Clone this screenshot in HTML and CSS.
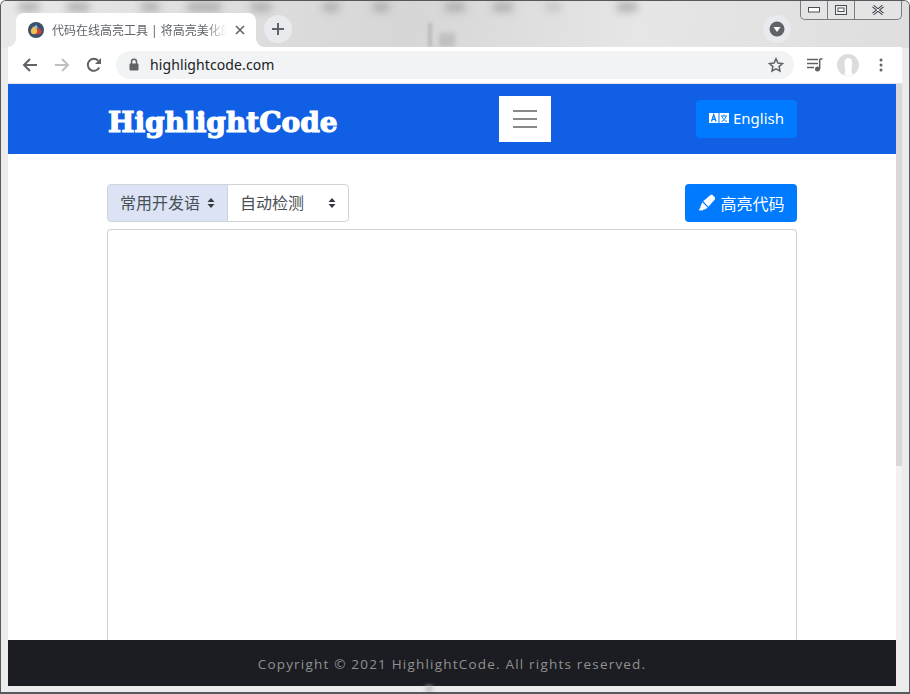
FILE: index.html
```html
<!DOCTYPE html>
<html>

<head>
    <title>代码在线高亮工具 | 将高亮美化的代码一键粘贴到 Word 或 PPT 中</title>
    <meta charset="utf-8">
    <meta name="viewport" content="width=device-width, initial-scale=1.0">
    <link rel="stylesheet" href="styles.css">
</head>

<body>
    <div class="vindue">
        <!-- sløret baggrund bag fanebladene -->
        <div class="sloret">
            <i class="klat k1"></i><i class="klat k2"></i><i class="klat k3"></i><i class="klat k4"></i>
            <i class="klat k5"></i><i class="klat k6"></i><i class="klat k7"></i><i class="klat k8"></i>
            <i class="klat k9"></i><i class="klat k10"></i><i class="klat k11"></i><i class="klat k12"></i>
            <i class="klat k13"></i>
        </div>
        <i class="bundklat"></i>

        <div class="vinduesknapper">
            <span class="vk"><svg width="12" height="6" viewBox="0 0 12 6"><rect x="0.5" y="0.5" width="11" height="4.5" fill="#fff" stroke="#4a4f57"/></svg></span>
            <span class="vk"><svg width="12" height="10" viewBox="0 0 12 10"><rect x="0.5" y="0.5" width="11" height="9" fill="#eee" stroke="#4a4f57"/><rect x="3" y="3" width="6" height="3.5" fill="#fff" stroke="#4a4f57"/></svg></span>
            <span class="vk luk"><svg width="12" height="10" viewBox="0 0 12 10"><path d="M1 1l10 8M11 1L1 9" stroke="#4a4f57" stroke-width="3"/><path d="M1 1l10 8M11 1L1 9" stroke="#fff" stroke-width="1"/></svg></span>
        </div>

        <div class="fanelinje">
            <div class="fane">
                <svg class="favicon" width="16" height="16" viewBox="0 0 16 16"><circle cx="8" cy="8" r="8" fill="#3c4f6b"/><path d="M10.500 5.500c2 1.500 3 2.800 3 4a3 3 0 0 1-6 0c0-1.200 1-2.500 3-4z" fill="#c9423a"/><path d="M6 4c2 2 3.200 3.500 3.200 5a3.200 3.200 0 0 1-6.400 0C2.800 7.500 4 6 6 4z" fill="#eec04f"/><path d="M8 2.500l1.800 3.200L8 7.500 6.600 5z" fill="#8fc3ee"/></svg>
                <span class="fanetitel">代码在线高亮工具 | 将高亮美化的</span>
                <svg class="faneluk" width="10" height="10" viewBox="0 0 10 10"><path d="M1 1l8 8M9 1l-8 8" stroke="#5f6368" stroke-width="1.600"/></svg>
            </div>
            <div class="rund ny">
                <svg width="14" height="14" viewBox="0 0 14 14"><path d="M7 1v12M1 7h12" stroke="#5f6368" stroke-width="2"/></svg>
            </div>
            <div class="rund ned">
                <svg width="16" height="16" viewBox="0 0 16 16"><circle cx="8" cy="8" r="7.500" fill="#5f6368"/><path d="M4.500 6h7L8 11z" fill="#fff"/></svg>
            </div>
        </div>

        <div class="vaerktoj">
            <svg class="ikon" width="16" height="16" viewBox="0 0 16 16"><path d="M15 8H2M8 2L2 8l6 6" fill="none" stroke="#5f6368" stroke-width="2"/></svg>
            <svg class="ikon" width="16" height="16" viewBox="0 0 16 16"><path d="M1 8h13M8 2l6 6-6 6" fill="none" stroke="#bdc1c6" stroke-width="2"/></svg>
            <svg class="ikon" width="16" height="16" viewBox="0 0 16 16"><path d="M13.200 10.500A6 6 0 1 1 12.300 3.800" fill="none" stroke="#5f6368" stroke-width="2"/><path d="M15 1v6H9z" fill="#5f6368"/></svg>
            <div class="adresse">
                <svg width="10" height="13" viewBox="0 0 10 13"><path d="M2.500 6V3.800a2.500 2.500 0 0 1 5 0V6" fill="none" stroke="#5f6368" stroke-width="1.500"/><rect x="0.500" y="5.500" width="9" height="7" rx="1" fill="#5f6368"/></svg>
                <span class="url">highlightcode.com</span>
                <svg class="stjerne" width="16" height="16" viewBox="0 0 16 16"><path d="M8 1.800l1.900 4.200 4.600.5-3.400 3.100.9 4.500L8 11.800l-4 2.300.9-4.500L1.500 6.500l4.600-.5z" fill="none" stroke="#5f6368" stroke-width="1.500"/></svg>
            </div>
            <svg class="spilleliste" width="16" height="14" viewBox="0 0 16 14"><path d="M0 1.500h11M0 5.500h11M0 9.500h7" stroke="#5f6368" stroke-width="1.500"/><path d="M12.700 1h2.800M12.700 1v10" stroke="#5f6368" stroke-width="1.500"/><circle cx="10.500" cy="11" r="2.500" fill="#5f6368"/></svg>
            <svg class="profil" width="22" height="22" viewBox="0 0 22 22"><circle cx="11" cy="11" r="11" fill="#dcdcdc"/><path d="M7 21c2-3 1-6 .5-10C7 6 9 4 11.500 4S15.500 6 15 11c-.4 4-1 7 1 9.500A11 11 0 0 1 7 21z" fill="#fff"/></svg>
            <svg class="prikker" width="4" height="14" viewBox="0 0 4 14"><circle cx="2" cy="2" r="1.500" fill="#5f6368"/><circle cx="2" cy="7" r="1.500" fill="#5f6368"/><circle cx="2" cy="12" r="1.500" fill="#5f6368"/></svg>
        </div>

        <div class="side">
            <div class="indhold">
                <header class="top">
                    <div class="top-indre">
                        <a class="logo" href="#">HighlightCode</a>
                        <button class="burger"><span></span><span></span><span></span></button>
                        <button class="knap sprog">
                            <svg width="20" height="10" viewBox="0 0 20 10"><rect width="9.500" height="10" fill="#fff"/><rect x="10.500" width="9.500" height="10" fill="#fff"/><path d="M2.500 8.500L4.700 1.800 7 8.500M3.300 6.300h2.900" fill="none" stroke="#007bff" stroke-width="1.300"/><path d="M12 3h6M15 1.500V3M13 3.500c.8 2.500 3 4 5 5M17 3.500c-.6 2.500-2.500 4-4.500 5" fill="none" stroke="#007bff" stroke-width="1"/></svg>
                            English
                        </button>
                    </div>
                </header>

                <main class="hoved">
                    <div class="raekke">
                        <div class="valg">
                            <div class="valg-felt forst">常用开发语<svg class="pile" width="8" height="12" viewBox="0 0 8 12"><path d="M4 1l3.500 4h-7zM4 11L.5 7h7z" fill="#343a40"/></svg></div>
                            <div class="valg-felt andet">自动检测<svg class="pile" width="8" height="12" viewBox="0 0 8 12"><path d="M4 1l3.500 4h-7zM4 11L.5 7h7z" fill="#343a40"/></svg></div>
                        </div>
                        <button class="knap fremhaev">
                            <svg width="20" height="18" viewBox="0 0 18 16"><path d="M6.500 6.500L13 .8c.6-.5 1.400-.4 1.900.1l2 2c.5.600.5 1.300 0 1.900l-5.700 6.500z" fill="#fff"/><path d="M5.700 7.300l4.800 4.800-2 1.500c-.5.300-1 .3-1.500.1l-1 1-3.800-.2L4 12.300c-.2-.5-.1-1 .2-1.500z" fill="#fff"/></svg>
                            高亮代码
                        </button>
                    </div>
                    <div class="kode"></div>
                </main>
            </div>
            <div class="rullebjaelke"><div class="rulle-greb"></div></div>
        </div>

        <footer class="bund">Copyright © 2021 HighlightCode. All rights reserved.</footer>
    </div>
</body>

</html>
```

FILE: styles.css
```css
* {
    box-sizing: border-box;
}

body {
    margin: 0;
    font-family: "Noto Sans", "Noto Sans CJK SC", sans-serif;
    overflow: hidden;
}

.vindue {
    position: relative;
    display: flex;
    flex-direction: column;
    width: 910px;
    height: 694px;
    padding: 0 7px 6px;
    overflow: hidden;
    background: #ececec;
    border: 1px solid #55585c;
    border-bottom-width: 2px;
    border-radius: 6px 6px 0 0;
}

/* sløret baggrund */
.sloret {
    position: absolute;
    top: 0;
    left: 0;
    width: 910px;
    height: 47px;
    overflow: hidden;
    background: linear-gradient(100deg, #e8e8e8, #d6d6d6 45%, #e6e6e6 70%, #dedede);
}

.klat {
    position: absolute;
    top: 2px;
    height: 8px;
    background: #a8a8a8;
    filter: blur(4px);
}

.k1 { left: 18px; width: 20px; }
.k2 { left: 66px; width: 22px; }
.k3 { left: 140px; width: 18px; }
.k4 { left: 186px; width: 34px; }
.k5 { left: 250px; width: 20px; }
.k6 { left: 322px; width: 16px; }
.k7 { left: 372px; width: 16px; }
.k8 { left: 444px; width: 20px; }
.k9 { left: 492px; width: 20px; }
.k10 { left: 544px; width: 16px; opacity: 0.5; }
.k11 { left: 616px; width: 20px; }
.k12 { left: 427px; top: 22px; width: 4px; height: 24px; opacity: 0.6; filter: blur(1.500px); }
.k13 { left: 438px; top: 32px; width: 16px; height: 14px; opacity: 0.5; filter: blur(2px); }

.bundklat {
    position: absolute;
    bottom: 0;
    left: 425px;
    width: 6px;
    height: 6px;
    background: #bbb;
    filter: blur(2px);
}

.vinduesknapper {
    position: absolute;
    top: 0;
    right: 7px;
    z-index: 2;
    display: flex;
    height: 19px;
    background: #e4e4e4;
    border: 1px solid #7a7d82;
    border-top: 0;
    border-radius: 0 0 5px 5px;
}

.vk {
    display: flex;
    align-items: center;
    justify-content: center;
    width: 27px;
    border-right: 1px solid #7a7d82;
}

.vk.luk {
    width: 46px;
    border-right: 0;
}

/* faneblade */
.fanelinje {
    position: relative;
    display: flex;
    flex: none;
    align-items: center;
    height: 46px;
    padding: 12px 0 0 8px;
}

.fane {
    position: relative;
    display: flex;
    align-items: center;
    width: 240px;
    height: 34px;
    padding: 0 12px;
    background: #fff;
    border-radius: 8px 8px 0 0;
}

.fane::before,
.fane::after {
    content: "";
    position: absolute;
    bottom: 0;
    width: 8px;
    height: 8px;
}

.fane::before {
    left: -8px;
    background: radial-gradient(circle at 0 0, transparent 7.500px, #fff 8px);
}

.fane::after {
    right: -8px;
    background: radial-gradient(circle at 100% 0, transparent 7.500px, #fff 8px);
}

.favicon {
    flex: none;
    margin-right: 8px;
}

.fanetitel {
    flex: none;
    width: 180px;
    color: #5f6368;
    font-size: 12px;
    white-space: nowrap;
    -webkit-mask-image: linear-gradient(to right, #000 85%, transparent 97%);
    mask-image: linear-gradient(to right, #000 85%, transparent 97%);
}

.faneluk {
    flex: none;
    margin-left: 3px;
}

.rund {
    display: flex;
    align-items: center;
    justify-content: center;
    width: 28px;
    height: 28px;
    background: #e8eaed;
    border-radius: 50%;
}

.ny {
    margin: -2px 0 0 8px;
}

.ned {
    margin: -2px 0 0 471px;
}

/* værktøjslinje */
.vaerktoj {
    position: relative;
    display: flex;
    flex: none;
    align-items: center;
    height: 37px;
    padding: 0 0 1px 14px;
    background: #fff;
    border-bottom: 1px solid #e2e3e5;
}

.ikon {
    flex: none;
    margin-right: 16px;
}

.adresse {
    display: flex;
    flex: none;
    align-items: center;
    width: 678px;
    height: 28px;
    margin-left: -2px;
    padding: 0 10px 0 13px;
    background: #f1f3f4;
    border-radius: 14px;
}

.url {
    margin-left: 11px;
    color: #202124;
    font-size: 14px;
    letter-spacing: 0.1px;
}

.stjerne {
    margin-left: auto;
}

.spilleliste {
    flex: none;
    margin-left: 13px;
}

.profil {
    flex: none;
    margin-left: 14px;
}

.prikker {
    flex: none;
    margin-left: 20px;
}

/* selve siden */
.side {
    display: flex;
    flex: 1;
    min-height: 0;
    background: #fff;
}

.indhold {
    flex: 1;
    min-width: 0;
}

.rullebjaelke {
    flex: none;
    width: 6px;
    background: #f1f1f1;
}

.rulle-greb {
    height: 382px;
    background: #d8d8d8;
}

.top {
    height: 70px;
    background: #115fe5;
}

.top-indre,
.hoved {
    width: 690px;
    margin: 0 auto;
}

.top-indre {
    display: flex;
    align-items: center;
    height: 100%;
}

.logo {
    display: block;
    flex: none;
    width: 230px;
    margin-top: 8px;
    padding-left: 1px;
    color: #fff;
    font-family: "DejaVu Serif", serif;
    font-size: 28px;
    font-weight: bold;
    line-height: 60px;
    white-space: nowrap;
    text-decoration: none;
    -webkit-text-stroke: 1.200px #fff;
}

.burger {
    display: flex;
    flex: none;
    flex-direction: column;
    gap: 6px;
    align-items: center;
    justify-content: center;
    width: 52px;
    height: 46px;
    margin-left: 162px;
    padding: 0;
    background: #fff;
    border: 0;
}

.burger span {
    width: 24px;
    height: 2px;
    background: #888;
}

.knap {
    display: flex;
    gap: 4px;
    align-items: center;
    justify-content: center;
    height: 38px;
    padding: 0;
    color: #fff;
    font-family: inherit;
    font-size: 16px;
    background: #007bff;
    border: 0;
    border-radius: 4px;
}

.sprog {
    width: 101px;
    margin-left: auto;
    padding-bottom: 2px;
    font-size: 15px;
}

.hoved {
    padding-top: 30px;
}

.raekke {
    display: flex;
    justify-content: space-between;
}

.fremhaev {
    width: 112px;
    padding-right: 1px;
}

.valg {
    display: flex;
    width: 242px;
    height: 38px;
    color: #495057;
    font-size: 16px;
}

.valg-felt {
    display: flex;
    align-items: center;
    justify-content: space-between;
    padding: 0 12px 2px 12px;
    border: 1px solid #ced4da;
}

.forst {
    width: 121px;
    background: #dbe3f5;
    border-radius: 4px 0 0 4px;
}

.andet {
    width: 122px;
    margin-left: -1px;
    background: #fff;
    border-radius: 0 4px 4px 0;
}

.pile {
    margin-top: 2px;
}

.kode {
    height: 411px;
    margin-top: 7px;
    background: #fff;
    border: 1px solid #ced4da;
    border-bottom: 0;
    border-radius: 4px 4px 0 0;
}

.bund {
    flex: none;
    height: 46px;
    margin-right: 6px;
    color: #919191;
    font-family: "Open Sans", sans-serif;
    font-size: 13.500px;
    line-height: 48px;
    letter-spacing: 1.200px;
    text-align: center;
    background: #1b1d22;
}
```
